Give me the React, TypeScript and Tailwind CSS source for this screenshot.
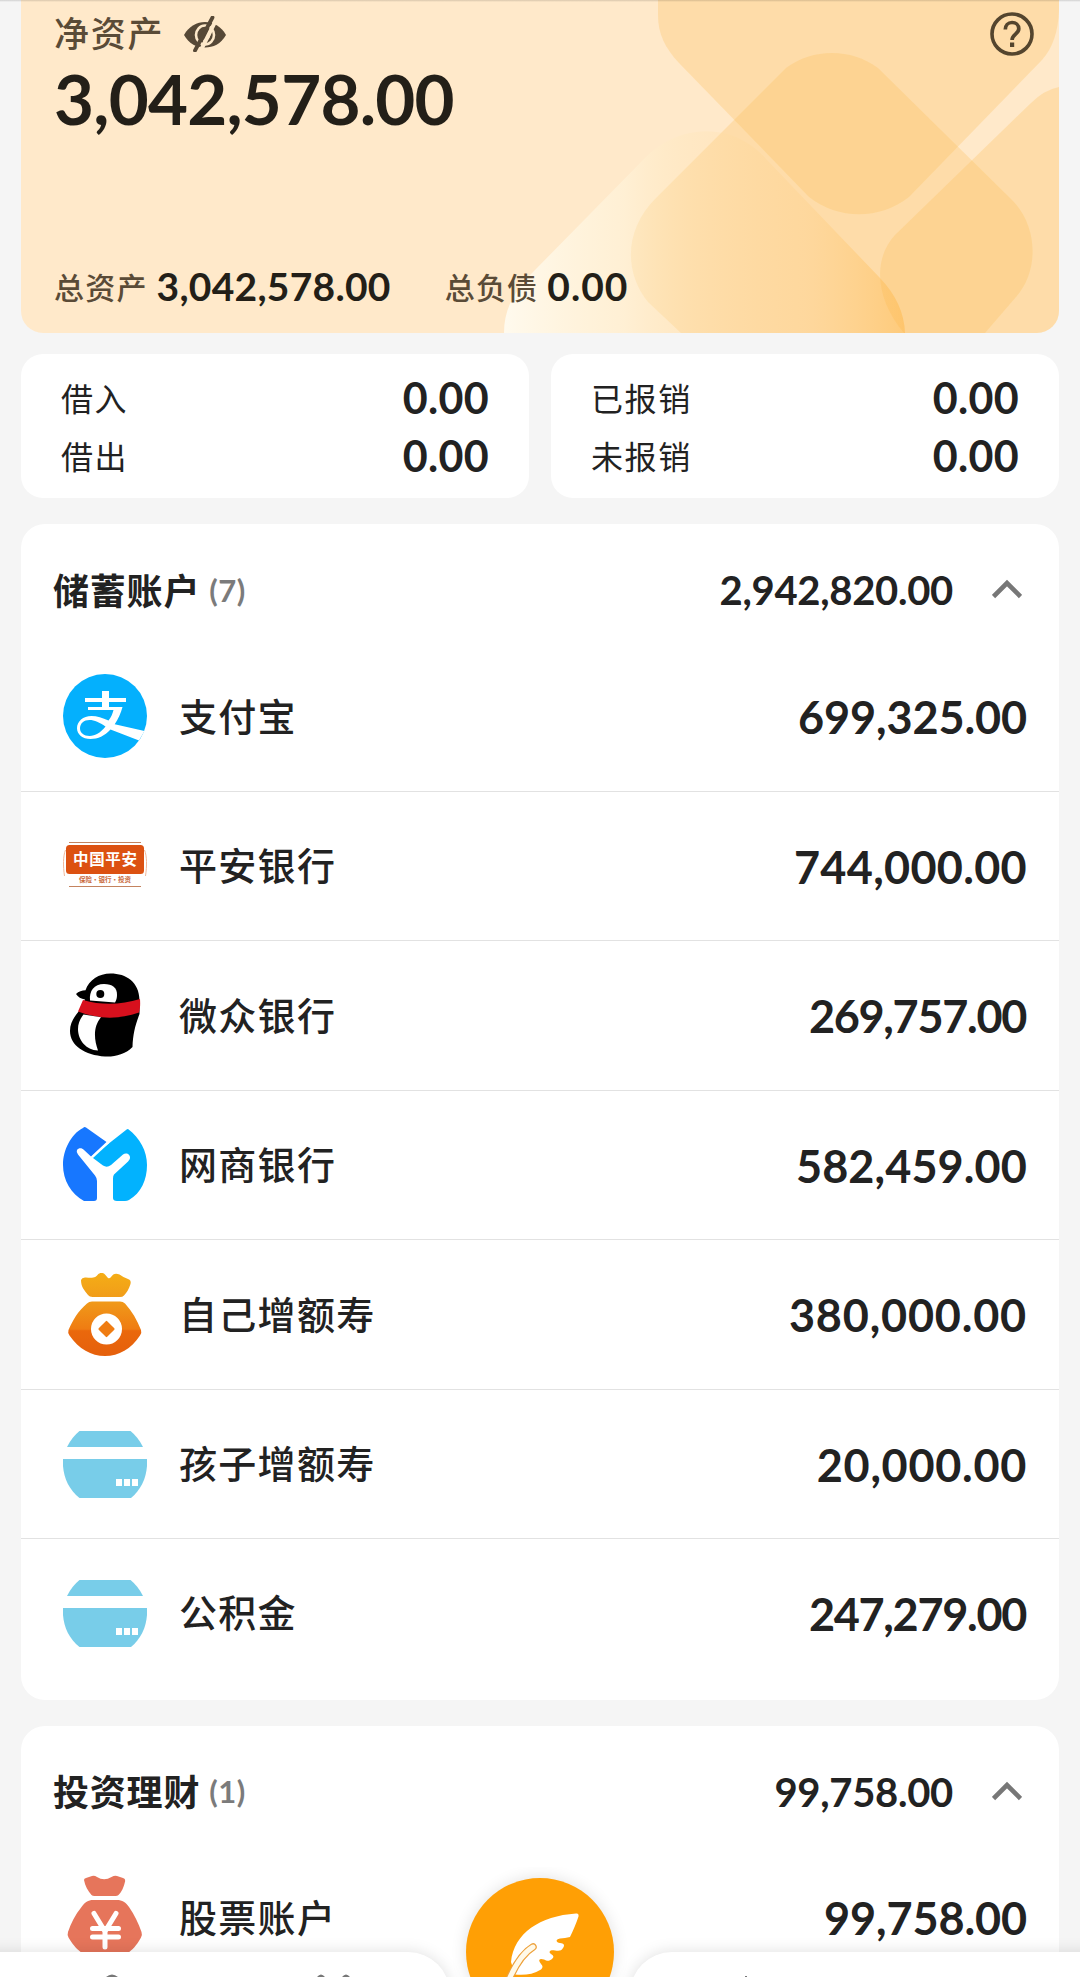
import { ReactNode } from "react";

interface Account {
  name: string;
  amount: string;
  icon: ReactNode;
  tracking: string;
}

interface AccountGroup {
  title: string;
  total: string;
  accounts: Account[];
}

function AlipayIcon() {
  return (
    <svg viewBox="0 0 84 84" className="w-[84px] h-[84px]">
      <circle cx="42" cy="42" r="42" fill="#04b0fd" />
      <path d="M39 17h7v7h17v4H46v5h13.500c-1.600 6.300-4.300 12-7.800 17.200L81.500 57 76 66.500 47.500 55.500C41.500 62 35 65 27.500 65 19.500 65 14 60.500 14 54.300 14 47.500 20 42 28.500 42c5.500 0 11 2 17 4.500 2.700-3.500 4-6.500 5-10.500H25v-3h14v-5H22v-4h17z" fill="#fff" />
      <path d="M42.500 52.500C37.500 58.500 32.500 62 26.500 62c-5.700 0-9.500-3-9.500-7.700 0-5 4-8.300 9.500-8.300 5 0 10 2.500 16 6.500z" fill="#04b0fd" />
    </svg>
  );
}

function PingAnIcon() {
  return (
    <svg viewBox="0 0 84 84" className="w-[84px] h-[84px]">
      <path d="M6 18.500h72M6 62.500h72" stroke="#c4835f" strokeWidth="1.200" />
      <path d="M2.500 26C0 32 0 42 1.500 52M81.500 26c2.500 6 2.500 16 1 26" stroke="#f0b89a" strokeWidth="1" fill="none" />
      <rect x="3" y="21" width="78" height="29" rx="3.500" fill="#dc5111" />
      <text x="42" y="41" textAnchor="middle" textLength="64" fontSize="15.500" fontWeight="700" fill="#fff" className="font-['Noto_Sans_CJK_SC',sans-serif]">中国平安</text>
      <text x="42" y="58" textAnchor="middle" textLength="52" fontSize="6.500" fontWeight="700" fill="#c96a3c" className="font-['Noto_Sans_CJK_SC',sans-serif]">保险·银行·投资</text>
    </svg>
  );
}

function WeBankIcon() {
  return (
    <svg viewBox="0 0 84 84" className="w-[84px] h-[84px]">
      <path d="M13 21c2.500-2.500 6-3.500 9.500-3.700C26 7 36 .5 47.500 .5 63.500 .5 76 9 76.500 27v14c-4.500 12-6.500 20-7 33C62 81.500 52 84 42 83.500 22 82 7 73 7 58c0-8 4-14 9-20l6-11.500C18 26 15 24 13 21z" fill="#000" />
      <path d="M27 27.500C26 18 31 11 41 11c8.500 0 13 4 13 10.500 0 3.500-.7 5.500-2 8z" fill="#fff" />
      <circle cx="37.300" cy="21" r="4" fill="#000" />
      <path d="M20 27c19 5.500 38 5 57-1 .3 5 .3 9-1 13.500-20 7-40 7-61-1z" fill="#d7101d" />
      <path d="M20.500 41.500l17.500 2.800C30 54 31 66 35 77.500 23 77 15 67 15 56c0-5.500 2-10 5.500-14.500z" fill="#fff" />
    </svg>
  );
}

function MyBankIcon() {
  return (
    <svg viewBox="0 0 84 84" className="w-[84px] h-[84px]">
      <path d="M23 4.500L43.500 19 28 33.500 34 50v25q0 3-3 3H21C8 71 0 57 0 42 0 27 8 11 20 5q1.500-1.500 3-.5z" fill="#1777ff" />
      <path d="M65 6C77 15 84 28 84 42c0 15-6 28-18 35q-2 1-4 1h-8q-4 0-4-3L36 46 28 34.500 63 7q1-1 2-1z" fill="#02b2fe" />
      <path d="M29 34.500L45.500 19.200" stroke="#fff" strokeWidth="2.200" />
      <path d="M14 27c1.500-2.500 5-2.500 7 0l7 6.500 12 9q4 2.500 8-.5l12-10.500c3-2.500 7.500-.5 7 3.500-.2 1.500-1.500 3-3 4.500L51 51.500q-1 1.500-1 4V79H34V58q0-3-2-5.500L15 31.500q-2-2.500-1-4.500z" fill="#fff" />
    </svg>
  );
}

function GoldBagIcon() {
  return (
    <svg viewBox="0 0 84 84" className="w-[84px] h-[84px]">
      <defs>
        <linearGradient id="goldBag" x1="0" y1="0" x2="0" y2="84" gradientUnits="userSpaceOnUse">
          <stop offset="0" stopColor="#f5ae16" />
          <stop offset=".35" stopColor="#f09a1a" />
          <stop offset=".68" stopColor="#ef7c12" />
          <stop offset=".7" stopColor="#ea680c" />
          <stop offset="1" stopColor="#e5600c" />
        </linearGradient>
      </defs>
      <path d="M18 8q1-3 5-2.500C31 6.500 33 5 34.500 3c2-2.500 5.500-2.500 7.500-.5l3 3.500q1.500 1 3-1 3-5 8.500-2.500 4 3 8.500 4.500 3.500 1 2.500 5c-1.500 5-4 9-6.500 11.500q-1.500 1.500-4 1.500H29.500q-3 0-4.500-2C21.500 18.500 18 15 18 8z" fill="url(#goldBag)" />
      <path d="M29 29.500h28q3 0 5 2C69 39 74 48 78 58q1 3-1 5.500C68 77 56 84 42 84S16 77 6.500 63.500Q4.500 61 5.500 58C10 48 15 39 24 31.500q2-2 5-2z" fill="url(#goldBag)" />
      <circle cx="43.500" cy="57" r="15.500" fill="#fff" />
      <rect x="37.500" y="51" width="12" height="12" rx="1" transform="rotate(45 43.500 57)" fill="#ef7c12" />
    </svg>
  );
}

function CardIcon() {
  return (
    <svg viewBox="0 0 84 84" className="w-[84px] h-[84px]">
      <path d="M16.500 9h51Q75 15 80 25H4Q9 15 16.500 9z" fill="#78cde9" />
      <path d="M0 37h84c1 16-5 30-16 39H16.500C5 67-1 53 0 37z" fill="#78cde9" />
      <path d="M53 57h6v7h-6zM61 57h6v7h-6zM69 57h6v7h-6z" fill="#fff" />
    </svg>
  );
}

function YuanBagIcon() {
  return (
    <svg viewBox="0 0 84 84" className="w-[84px] h-[84px]">
      <path d="M21 5q0-1.500 2-2l6-2q2.500-.7 5 1 7 4.500 14.500 0 3-1.700 5.500-1l6 2q2.500.7 2.200 3C61 12 58.500 17 55.500 20q-1 1-3 1h-21q-2 0-3-1C25 16 22 11 21 5z" fill="#e6755b" />
      <path d="M30 25h24c5 0 9 2.500 12 7 5.500 8 9.500 16 12.500 25q1 3-.5 5.500C72 73 64 84 42 84S12 73 5.500 62.500Q4 60 5 57c3-9 7-17 13.500-25 3-4.500 7-7 11.500-7z" fill="#e6755b" />
      <path d="M31 38.500l11 18 11-18M29.500 53.500h26M29.500 62h26M42 56v16" stroke="#fff" strokeWidth="5" strokeLinecap="round" strokeLinejoin="round" fill="none" />
    </svg>
  );
}

const groups: AccountGroup[] = [
  {
    title: "储蓄账户",
    total: "2,942,820.00",
    accounts: [
      { name: "支付宝", amount: "699,325.00", icon: <AlipayIcon />, tracking: "tracking-[-0.1px]" },
      { name: "平安银行", amount: "744,000.00", icon: <PingAnIcon />, tracking: "tracking-[0.3px]" },
      { name: "微众银行", amount: "269,757.00", icon: <WeBankIcon />, tracking: "tracking-[-1.3px] mr-[1px]" },
      { name: "网商银行", amount: "582,459.00", icon: <MyBankIcon />, tracking: "tracking-[0.1px]" },
      { name: "自己增额寿", amount: "380,000.00", icon: <GoldBagIcon />, tracking: "tracking-[0.8px]" },
      { name: "孩子增额寿", amount: "20,000.00", icon: <CardIcon />, tracking: "tracking-[0.7px]" },
      { name: "公积金", amount: "247,279.00", icon: <CardIcon />, tracking: "tracking-[-1.3px] mr-[1px]" },
    ],
  },
  {
    title: "投资理财",
    total: "99,758.00",
    accounts: [{ name: "股票账户", amount: "99,758.00", icon: <YuanBagIcon />, tracking: "tracking-[-0.1px]" }],
  },
];

const loanCards = [
  [
    { label: "借入", value: "0.00" },
    { label: "借出", value: "0.00" },
  ],
  [
    { label: "已报销", value: "0.00" },
    { label: "未报销", value: "0.00" },
  ],
];

function HeroPattern() {
  return (
    <svg viewBox="21 0 1038 333" className="absolute inset-0 w-full h-full">
      <defs>
        <linearGradient id="glow" x1="504" y1="0" x2="905" y2="0" gradientUnits="userSpaceOnUse">
          <stop offset="0" stopColor="#fffdf4" stopOpacity=".85" />
          <stop offset=".3" stopColor="#fff6de" stopOpacity=".5" />
          <stop offset=".5" stopColor="#ffe2ad" stopOpacity=".25" />
          <stop offset=".75" stopColor="#ffc468" stopOpacity=".18" />
          <stop offset="1" stopColor="#ffae30" stopOpacity=".38" />
        </linearGradient>
      </defs>
      <path d="M658 0V15C658 34 665 48 679 63L809 197C838 220 880 220 909 197L1042 60Q1058 42 1059 10V0z" fill="#fcc15c" fillOpacity=".3" />
      <path d="M786 68C813 48 851 48 878 68L1010 198C1038 224 1040 270 1016 297L985 333H681L648 302C624 272 624 230 656 198z" fill="#fcc15c" fillOpacity=".3" />
      <path d="M1059 87Q1044 90 1031 103L895 235C872 260 876 300 904 333H1059z" fill="#fcc15c" fillOpacity=".3" />
      <path d="M504 333C504 308 515 290 535 270L645 158C680 122 735 122 767 160L880 278Q904 303 905 333z" fill="url(#glow)" />
    </svg>
  );
}

function HiddenEyeIcon() {
  return (
    <svg viewBox="0 0 42 36" className="w-[42px] h-[36px]">
      <path d="M0 19C5 10 13 6 21 6s16 4 21 13C37 28 29 31.500 21 31.500S5 28 0 19z" fill="#564836" />
      <ellipse cx="21" cy="19" rx="9" ry="9.500" fill="none" stroke="#fee9ca" strokeWidth="2.600" />
      <path d="M25.500 15q1 8-6 10" fill="none" stroke="#fee9ca" strokeWidth="2" />
      <path d="M34 0L16 36" stroke="#fee9ca" strokeWidth="4" />
      <path d="M28.500 1.500L11 34.500" stroke="#564836" strokeWidth="3.800" strokeLinecap="round" />
    </svg>
  );
}

function HelpIcon() {
  return (
    <svg viewBox="0 0 44 44" className="w-[44px] h-[44px]">
      <circle cx="22" cy="22" r="20" fill="none" stroke="#54452e" strokeWidth="3.600" />
      <path d="M15.300 17.500c0-4 2.800-7 6.700-7s6.800 2.700 6.800 6.300c0 5.200-6.700 5.700-6.700 11.200" fill="none" stroke="#54452e" strokeWidth="3.700" />
      <path d="M20 30.500h4.200V35H20z" fill="#54452e" />
    </svg>
  );
}

function GroupCard({ group }: { group: AccountGroup }) {
  return (
    <section className="bg-white rounded-[24px] pb-[13px]">
      <div className="h-[118px] pt-[14px] pl-[32px] pr-[37px] flex items-center">
        <h2 className="-mt-[3px] font-bold text-[36px] tracking-[0.800px]">{group.title}</h2>
        <span className="ml-[9px] text-[31px] font-bold text-[#7b7b7b] tracking-[0.500px] font-['Lato',sans-serif]">
          ({group.accounts.length})
        </span>
        <span className="ml-auto text-[40px] font-bold tracking-[-0.300px] font-['Lato',sans-serif]">{group.total}</span>
        <svg viewBox="0 0 30 20" className="ml-[39px] w-[30px] h-[20px] -mt-[2px]">
          <path d="M1.500 17.500L15 4l13.500 13.500" fill="none" stroke="#777" strokeWidth="4.600" />
        </svg>
      </div>
      {group.accounts.map((account) => (
        <div
          key={account.name}
          className="h-[149.500px] last:h-[147.500px] pl-[42px] pr-[32px] flex items-center border-b border-[#e2e2e2] last:border-b-0"
        >
          {account.icon}
          <span className="-mt-[3px] ml-[32px] text-[38px] font-medium tracking-[1.300px]">{account.name}</span>
          <span className={`ml-auto pt-[3px] text-[45px] font-bold font-['Lato',sans-serif] ${account.tracking}`}>
            {account.amount}
          </span>
        </div>
      ))}
    </section>
  );
}

function TabBar() {
  return (
    <nav className="absolute inset-x-0 bottom-0 h-[110px] overflow-hidden">
      <div className="absolute left-[-20px] top-[85px] w-[470px] h-[80px] bg-white rounded-tr-[42px] shadow-[0_0_16px_rgba(0,0,0,0.13)]" />
      <div className="absolute right-[-20px] top-[85px] w-[470px] h-[80px] bg-white rounded-tl-[42px] shadow-[0_0_16px_rgba(0,0,0,0.13)]" />
      <div className="absolute left-[466px] top-[11px] w-[148px] h-[148px] rounded-full bg-[#ff9f05] shadow-[0_0_16px_rgba(0,0,0,0.12)]">
        <svg viewBox="0 0 148 148" className="w-full h-full">
          <path d="M110 35.500q3-.5 2.500 3C110 46 107 53 104 59q-5 1-10 1.500c-5 1-4 4 0 4.500 4 .5 5 2 3 5-1.500 3-4 3-8 2.500-5-1-7 1.500-4 3.500s3 3 1 5c-3 2.500-5 2-8 .5-4-1.500-6 0-4 3s4 4 1 7c-8 5-17 6-26 5L45 84C48 55 74 38 110 35.500z" fill="#fff" />
          <path d="M67 69C55 76 46 92 38 114" fill="none" stroke="#eda03a" strokeWidth="7.500" strokeLinecap="round" />
          <path d="M67 69C55 76 46 92 38 114" fill="none" stroke="#fff9e8" strokeWidth="5" strokeLinecap="round" />
        </svg>
      </div>
      {/* Only the tops of the tab icons show above the fold */}
      <svg viewBox="0 0 1080 4" className="absolute left-0 bottom-0 w-full h-[4px]">
        <path d="M106 4q6-5 12 0zM317 4q4-5 8 0zM342 4q4-5 8 0z" fill="#777" />
        <path d="M745 3h2v1h-2z" fill="#777" />
      </svg>
    </nav>
  );
}

export default function App() {
  return (
    <main className="relative w-[1080px] h-[1977px] overflow-hidden bg-[#f5f5f5] px-[21px] text-[#222] leading-none font-['Noto_Sans_CJK_SC',sans-serif]">
      {/* Net worth */}
      <section className="relative h-[333px] rounded-b-[22px] overflow-hidden bg-[#ffe9ca] px-[33px] pt-[12px]">
        <HeroPattern />
        <div className="relative h-[44px] flex items-center text-[#5a4b37]">
          <span className="-mt-[6px] text-[35px] font-medium tracking-[1.800px]">净资产</span>
          <span className="ml-[20px]"><HiddenEyeIcon /></span>
          <span className="ml-auto mr-[-8px]"><HelpIcon /></span>
        </div>
        <div className="relative mt-[12px] h-[60px] flex items-center text-[69px] font-bold tracking-[-0.750px] text-[#231f18] font-['Lato',sans-serif]">
          3,042,578.00
        </div>
        <div className="relative mt-[138px] h-[40px] flex items-center text-[#5a4b37]">
          <span className="text-[30px] font-medium tracking-[1.200px]">总资产</span>
          <span className="ml-[9px] text-[39px] font-bold tracking-[0.250px] text-[#231f18] font-['Lato',sans-serif]">3,042,578.00</span>
          <span className="ml-[54px] text-[30px] font-medium tracking-[1.200px]">总负债</span>
          <span className="ml-[9px] text-[39px] font-bold tracking-[1px] text-[#231f18] font-['Lato',sans-serif]">0.00</span>
        </div>
      </section>

      {/* Loans and reimbursements */}
      <div className="mt-[21px] grid grid-cols-2 gap-[22px]">
        {loanCards.map((rows, i) => (
          <section key={i} className="h-[144px] rounded-[22px] bg-white px-[40px] pt-[14px]">
            {rows.map((row) => (
              <div key={row.label} className="h-[58px] flex items-center justify-between">
                <span className="-mt-[1px] text-[32px] tracking-[1.600px]">{row.label}</span>
                <span className="text-[43px] font-bold tracking-[0.300px] font-['Lato',sans-serif]">{row.value}</span>
              </div>
            ))}
          </section>
        ))}
      </div>

      <div className="mt-[26px] flex flex-col gap-[26px]">
        {groups.map((group) => (
          <GroupCard key={group.title} group={group} />
        ))}
      </div>

      <TabBar />
      <div className="absolute inset-x-0 top-0 h-[2px] bg-linear-to-b from-black/15 to-transparent" />
    </main>
  );
}
